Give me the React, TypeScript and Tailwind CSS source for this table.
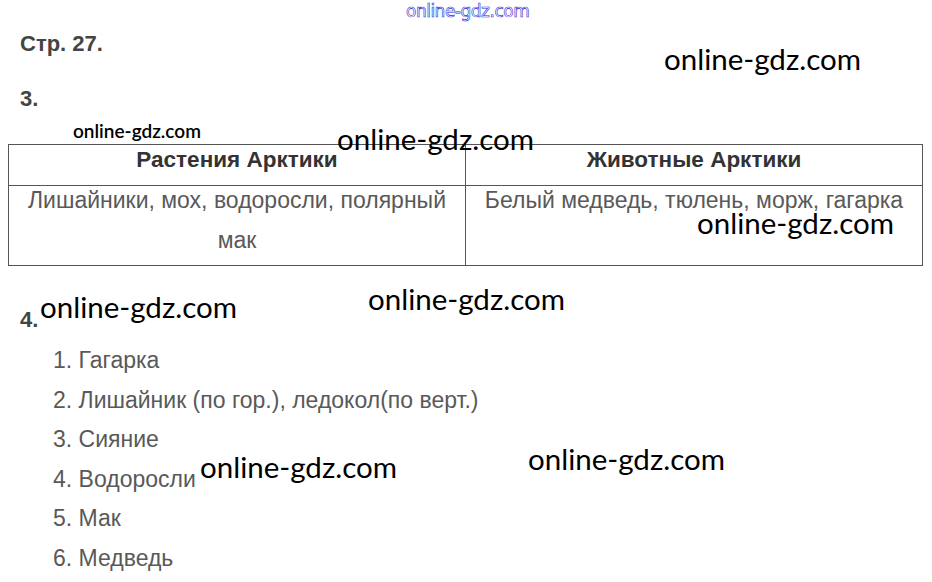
const marks = [
  { left: 664, top: 42 },
  { left: 337, top: 122 },
  { left: 697, top: 206 },
  { left: 40, top: 290 },
  { left: 368, top: 282 },
  { left: 200, top: 450 },
  { left: 528, top: 442 },
];

const answers = [
  'Гагарка',
  'Лишайник (по гор.), ледокол(по верт.)',
  'Сияние',
  'Водоросли',
  'Мак',
  'Медведь',
];

export default function App() {
  return (
    <div className="relative w-[932px] h-[582px] overflow-hidden bg-white font-['Liberation_Sans',Arial,sans-serif] text-[#444]">
      <div className="pt-[32px] pl-5">
        <h2 className="text-[22px] leading-6 font-bold text-[#444]">Стр. 27.</h2>
        <h3 className="mt-[31px] text-[22px] leading-6 font-bold text-[#444]">3.</h3>
      </div>

      <table className="mt-[33px] ml-2 w-[915px] border-collapse border border-[#555] text-center">
        <thead>
          <tr className="h-[41px]">
            <th className="w-[457px] border border-[#555] pt-[2px] align-top text-[22.5px] leading-[26px] font-bold text-[#333]">
              Растения Арктики
            </th>
            <th className="border border-[#555] pt-[2px] align-top text-[22.5px] leading-[26px] font-bold text-[#333]">
              Животные Арктики
            </th>
          </tr>
        </thead>
        <tbody>
          <tr className="h-[80px]">
            <td className="border border-[#555] px-4 align-top text-[23px] leading-[40px] text-[#595959]">
              <div className="-mt-[6px]">Лишайники, мох, водоросли, полярный мак</div>
            </td>
            <td className="border border-[#555] px-3 align-top text-[23px] leading-[40px] text-[#595959]">
              <div className="-mt-[6px]">Белый медведь, тюлень, морж, гагарка</div>
            </td>
          </tr>
        </tbody>
      </table>

      <div className="pl-5 mt-[42px]">
        <h3 className="text-[22px] leading-6 font-bold text-[#444]">4.</h3>
        <ol className="mt-[9px] pl-[33px]">
          {answers.map((a, i) => (
            <li key={i} className="text-[23px] leading-[39.5px] text-[#595959]">
              {i + 1}. {a}
            </li>
          ))}
        </ol>
      </div>

      {/* watermarks */}
      <div className="absolute left-[406px] top-[1px] text-[17px] leading-5 tracking-[-0.5px] font-['DejaVu_Sans',sans-serif] text-transparent [-webkit-text-stroke:0.6px_#2d2bd8]">
        online-gdz.com
      </div>
      <div className="absolute left-[73px] top-[121px] text-[19px] leading-5 font-semibold font-['Lato',sans-serif] text-black">
        online-gdz.com
      </div>
      {marks.map((m, i) => (
        <div
          key={i}
          className="absolute text-[29.5px] leading-[34px] font-['Lato',sans-serif] text-black"
          style={{ left: m.left, top: m.top }}
        >
          online-gdz.com
        </div>
      ))}
    </div>
  );
}
